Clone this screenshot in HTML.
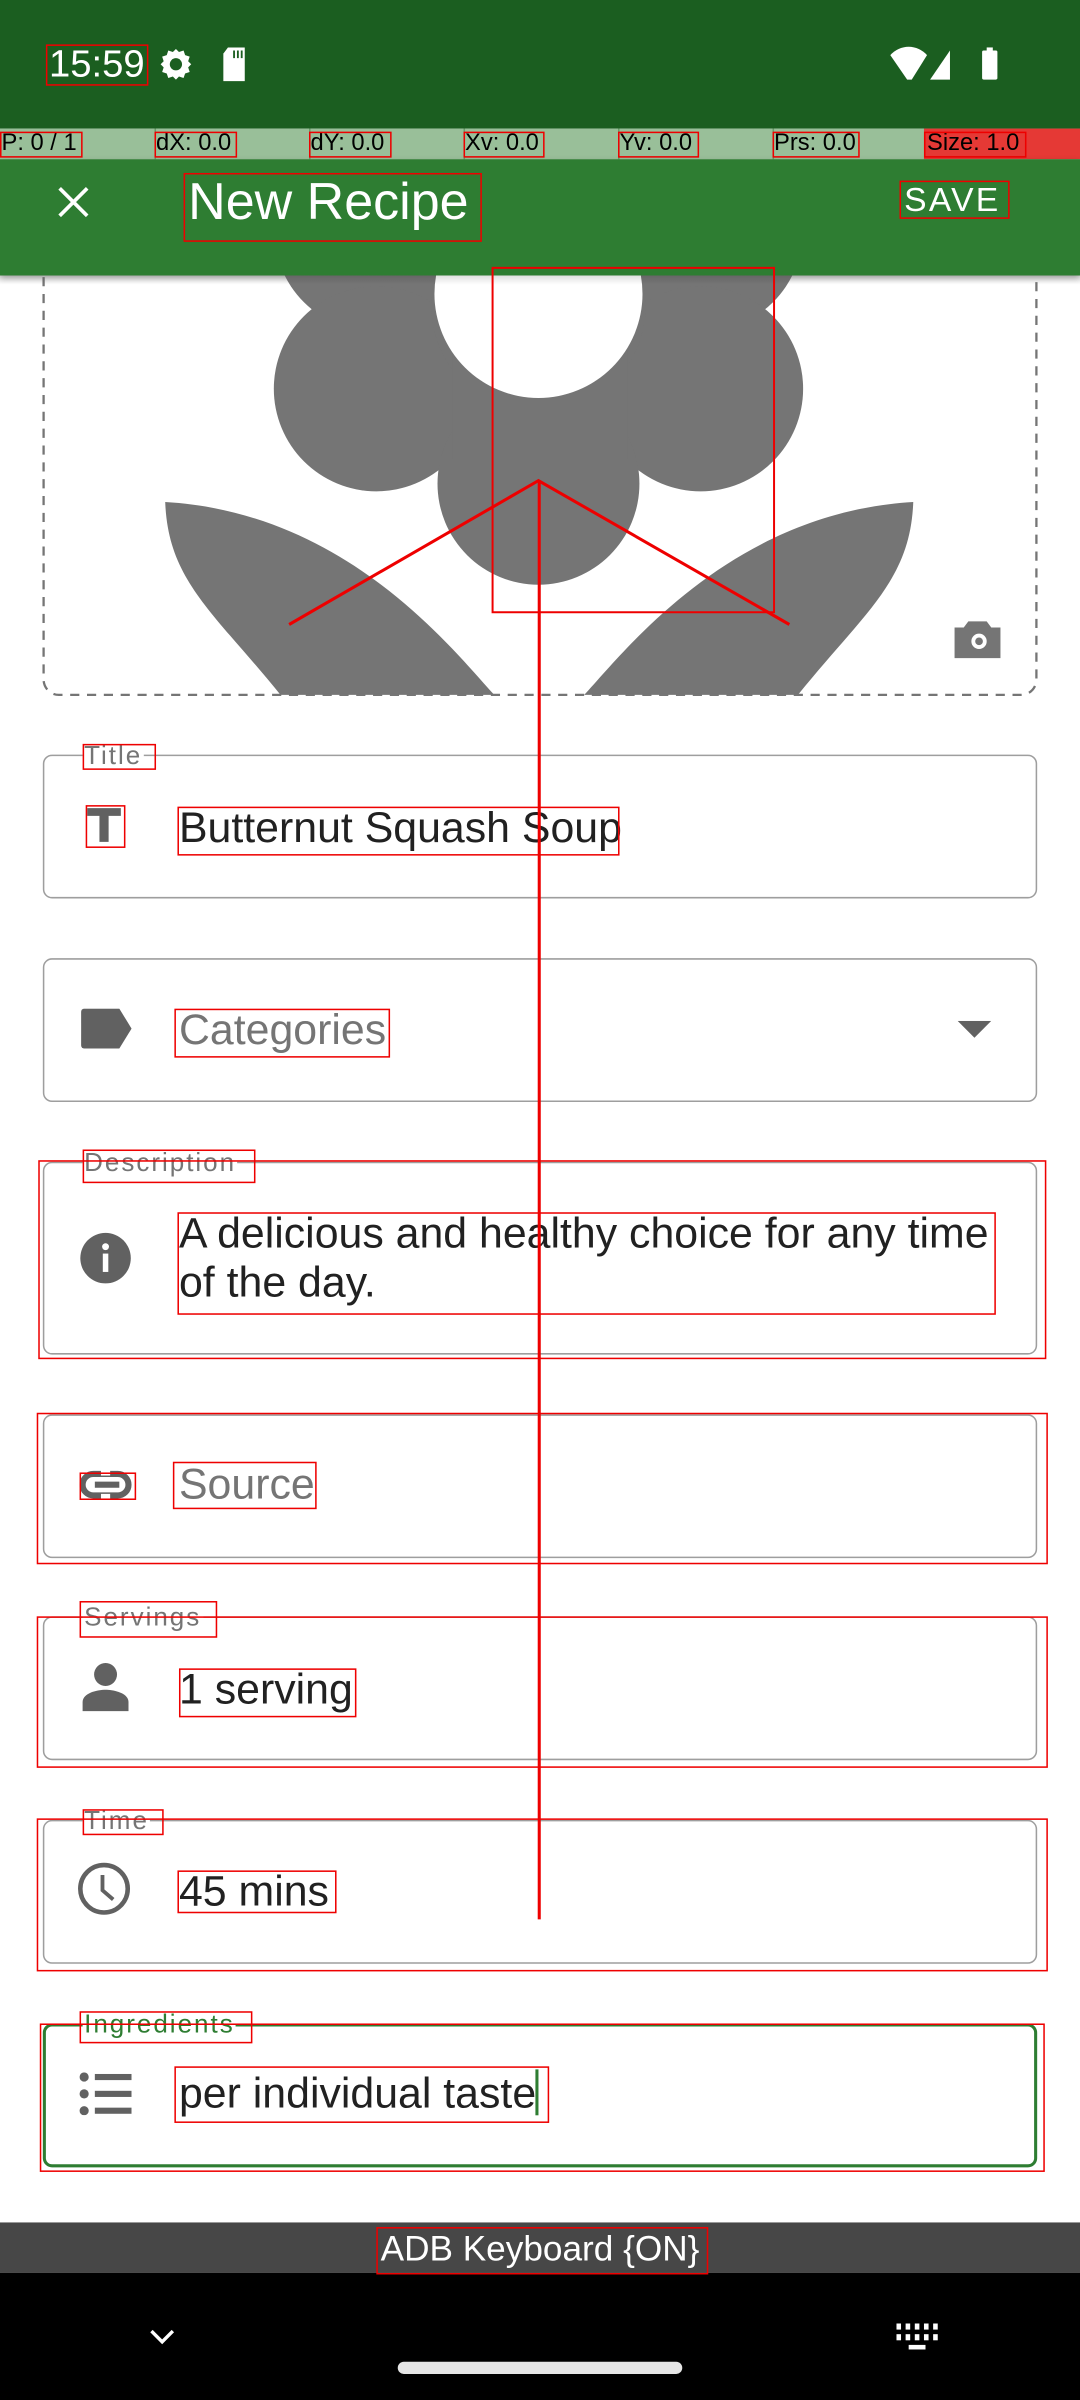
<!DOCTYPE html>
<html><head><meta charset="utf-8">
<style>
html,body{margin:0;padding:0;width:1080px;height:2400px;overflow:hidden;background:#fff}
#s{position:absolute;left:0;top:0;width:706px;height:1568px;transform-origin:0 0;transform:scale(1.52975,1.53061);font-family:"Liberation Sans",sans-serif;overflow:hidden;background:#fff}
.a{position:absolute}
.f{position:absolute;left:28px;width:650px;border:1.6px solid #9e9e9e;border-radius:6px;box-sizing:border-box}
.lb{position:absolute;left:54px;font-size:17px;letter-spacing:1.3px;color:#757575;background:#fff;padding:0 1px;line-height:16px}
.t{position:absolute;left:117px;font-size:28px;color:#212121;line-height:32px;white-space:nowrap}
.ph{color:#757575}
.r{position:absolute;border:1.3px solid #e00;box-sizing:border-box}
.ov span{position:absolute;top:0}
</style></head><body>
<div id="s">
<!-- status bar -->
<div class="a" style="left:0;top:0;width:706px;height:84px;background:#1b5e20"></div>
<div class="a" style="left:32px;top:28px;color:#fff;font-size:25px">15:59</div>
<svg class="a" style="left:102px;top:30px" width="26" height="24" viewBox="0 0 24 24"><path fill="#fff" d="M12 2l2 2 3-1 1 3 3 1-1 3 2 2-2 2 1 3-3 1-1 3-3-1-2 2-2-2-3 1-1-3-3-1 1-3-2-2 2-2-1-3 3-1 1-3 3 1z"/><circle cx="12" cy="12" r="4" fill="#1b5e20"/></svg>
<svg class="a" style="left:144px;top:30px" width="18" height="24" viewBox="0 0 18 24"><path fill="#fff" d="M5 1h11v22H2V5z"/><path stroke="#1b5e20" stroke-width="1.2" d="M9 3v5M11.5 3v5M14 3v5"/></svg>
<svg class="a" style="left:580px;top:30px" width="80" height="24" viewBox="0 0 80 24"><path fill="#fff" d="M2 6a16 16 0 0 1 24 0L16 22H13z"/><path fill="#fff" d="M41 3v19H28z"/><rect x="62" y="3" width="10" height="19" rx="1" fill="#fff"/><rect x="65" y="1" width="4" height="3" fill="#fff"/></svg>
<!-- overlay bar -->
<div class="a" style="left:0;top:84px;width:706px;height:20px;background:#99bf99"></div>
<div class="a" style="left:604px;top:84px;width:102px;height:20px;background:#e53935"></div>
<div class="a" style="left:101px;top:84px;width:1px;height:20px;background:#6a9a6a"></div>
<div class="a" style="left:202px;top:84px;width:1px;height:20px;background:#6a9a6a"></div>
<div class="a" style="left:303px;top:84px;width:1px;height:20px;background:#6a9a6a"></div>
<div class="a" style="left:404px;top:84px;width:1px;height:20px;background:#6a9a6a"></div>
<div class="a" style="left:505px;top:84px;width:1px;height:20px;background:#6a9a6a"></div>
<div class="a ov" style="left:0;top:85px;width:706px;font-size:15.5px;color:#000;line-height:18px">
<span style="left:1px">P: 0 / 1</span><span style="left:102px">dX: 0.0</span><span style="left:203px">dY: 0.0</span><span style="left:304px">Xv: 0.0</span><span style="left:405px">Yv: 0.0</span><span style="left:506px">Prs: 0.0</span><span style="left:606px">Size: 1.0</span></div>
<div class="r" style="left:0;top:86px;width:54px;height:17px"></div>
<div class="r" style="left:101px;top:86px;width:54px;height:17px"></div>
<div class="r" style="left:202px;top:86px;width:54px;height:17px"></div>
<div class="r" style="left:303px;top:86px;width:53px;height:17px"></div>
<div class="r" style="left:404px;top:86px;width:53px;height:17px"></div>
<div class="r" style="left:505px;top:86px;width:57px;height:17px"></div>
<div class="r" style="left:604px;top:86px;width:67px;height:17px"></div>
<!-- toolbar -->
<div class="a" style="left:0;top:104px;width:706px;height:76px;background:#2e7d32;box-shadow:0 2px 4px rgba(0,0,0,.3)"></div>
<svg class="a" style="left:36px;top:120px" width="24" height="24" viewBox="0 0 24 24"><path stroke="#fff" stroke-width="2.4" d="M3 3l18 18M21 3L3 21"/></svg>
<div class="a" style="left:123px;top:112px;color:#fff;font-size:34px;line-height:40px">New Recipe</div>
<div class="a" style="left:591px;top:118px;color:#fff;font-size:22px;letter-spacing:1.5px;line-height:26px">SAVE</div>
<!-- image area -->
<svg class="a" style="left:0;top:180px" width="706" height="280" viewBox="0 180 706 280">
<defs><clipPath id="c"><rect x="28" y="180" width="650" height="274"/></clipPath></defs>
<g clip-path="url(#c)" fill="#757575">
<circle cx="246" cy="150" r="67"/><circle cx="458" cy="150" r="67"/>
<circle cx="246" cy="254" r="67"/><circle cx="458" cy="254" r="67"/>
<circle cx="352" cy="316" r="66"/><circle cx="352" cy="200" r="70"/>
<rect x="296" y="180" width="114" height="120"/>
<circle cx="352" cy="192" r="68" fill="#fff"/>
<path d="M108 328C230 335 300 430 325 456H185C140 400 110 380 108 328z"/>
<path d="M597 328C475 335 405 430 380 456H520C565 400 595 380 597 328z"/>
</g>
<rect x="28.5" y="170" width="649" height="284" rx="10" fill="none" stroke="#757575" stroke-width="1.5" stroke-dasharray="6 5"/>
<path fill="#757575" d="M624 410h6l3-4h12l3 4h6v20h-30z"/><circle cx="640" cy="419" r="5" fill="#fff"/><circle cx="640" cy="419" r="2.5" fill="#757575"/>
</svg>
<div class="a" style="left:0;top:180px;width:706px;height:6px;background:linear-gradient(rgba(0,0,0,.12),rgba(0,0,0,0))"></div>

<!-- Title -->
<div class="f" style="top:493px;height:94px"></div><div class="lb" style="top:486px">Title</div>
<svg class="a" style="left:56px;top:527px" width="24" height="24" viewBox="0 0 24 24"><path fill="#616161" d="M1 1h22v5H15v17H9V6H1z"/></svg>
<div class="t" style="top:525px">Butternut Squash Soup</div>
<!-- Categories -->
<div class="f" style="top:626px;height:94px"></div>
<svg class="a" style="left:53px;top:659px" width="34" height="26" viewBox="0 0 34 26"><path fill="#616161" d="M2 0h23l8 13-8 13H2a2 2 0 0 1-2-2V2a2 2 0 0 1 2-2z"/></svg>
<div class="t ph" style="top:657px">Categories</div>
<svg class="a" style="left:626px;top:667px" width="22" height="12" viewBox="0 0 22 12"><path fill="#616161" d="M0 0h22L11 11z"/></svg>
<!-- Description -->
<div class="f" style="top:759px;height:126px"></div><div class="lb" style="top:752px">Description</div>
<svg class="a" style="left:51px;top:804px" width="36" height="36" viewBox="0 0 24 24"><circle cx="12" cy="12" r="11" fill="#616161"/><rect x="10.8" y="10" width="2.4" height="8" fill="#fff"/><circle cx="12" cy="7" r="1.5" fill="#fff"/></svg>
<div class="t" style="top:790px">A delicious and healthy choice for any time<br>of the day.</div>
<!-- Source -->
<div class="f" style="top:924px;height:94px"></div>
<svg class="a" style="left:52px;top:960px" width="36" height="20" viewBox="0 0 36 20"><rect x="2" y="3" width="30" height="14" rx="7" fill="none" stroke="#616161" stroke-width="4"/><rect x="10" y="8" width="16" height="4" fill="#616161"/><rect x="14" y="0" width="6" height="4" fill="#fff"/><rect x="14" y="16" width="6" height="4" fill="#fff"/></svg>
<div class="t ph" style="top:954px">Source</div>
<!-- Servings -->
<div class="f" style="top:1056px;height:94px"></div><div class="lb" style="top:1049px">Servings</div>
<svg class="a" style="left:52px;top:1086px" width="34" height="32" viewBox="0 0 34 32"><circle cx="17" cy="8" r="7.5" fill="#616161"/><path fill="#616161" d="M2 32v-6c0-6 10-8 15-8s15 2 15 8v6z"/></svg>
<div class="t" style="top:1088px">1 serving</div>
<!-- Time -->
<div class="f" style="top:1189px;height:94px"></div><div class="lb" style="top:1182px">Time</div>
<svg class="a" style="left:50px;top:1216px" width="36" height="36" viewBox="0 0 36 36"><circle cx="18" cy="18" r="15.5" fill="none" stroke="#616161" stroke-width="3"/><path d="M17 9v10l7 6" fill="none" stroke="#616161" stroke-width="2.5"/></svg>
<div class="t" style="top:1220px">45 mins</div>
<!-- Ingredients -->
<div class="f" style="top:1322px;height:94px;border:2.5px solid #2e7d32"></div><div class="lb" style="top:1315px;color:#2e7d32">Ingredients</div>
<svg class="a" style="left:52px;top:1354px" width="34" height="28" viewBox="0 0 34 28"><g fill="#616161"><circle cx="3" cy="3" r="3"/><circle cx="3" cy="14" r="3"/><circle cx="3" cy="25" r="3"/><rect x="10" y="1" width="24" height="4"/><rect x="10" y="12" width="24" height="4"/><rect x="10" y="23" width="24" height="4"/></g></svg>
<div class="t" style="top:1352px">per individual taste<span style="display:inline-block;width:2px;height:30px;background:#2e7d32;vertical-align:top"></span></div>

<!-- keyboard bar -->
<div class="a" style="left:0;top:1452px;width:706px;height:33px;background:#474747"></div>
<div class="a" style="left:0;top:1455px;width:706px;text-align:center;color:#fff;font-size:23px;line-height:28px">ADB Keyboard {ON}</div>
<div class="a" style="left:0;top:1485px;width:706px;height:84px;background:#000"></div>
<svg class="a" style="left:96px;top:1520px" width="20" height="14" viewBox="0 0 20 14"><path d="M3 3l7 7 7-7" stroke="#fff" stroke-width="2.2" fill="none"/></svg>
<svg class="a" style="left:586px;top:1518px" width="28" height="20" viewBox="0 0 28 20"><g fill="#fff"><rect x="0" y="0" width="3" height="4"/><rect x="6" y="0" width="3" height="4"/><rect x="12" y="0" width="3" height="4"/><rect x="18" y="0" width="3" height="4"/><rect x="24" y="0" width="3" height="4"/><rect x="0" y="7" width="3" height="4"/><rect x="6" y="7" width="3" height="4"/><rect x="12" y="7" width="3" height="4"/><rect x="18" y="7" width="3" height="4"/><rect x="24" y="7" width="3" height="4"/><rect x="8" y="14" width="11" height="3"/></g></svg>
<div class="a" style="left:260px;top:1543px;width:186px;height:8px;border-radius:4px;background:#e6e6e6"></div>

<!-- debug overlays -->
<div class="r" style="left:30px;top:29px;width:67px;height:27px"></div>
<div class="r" style="left:120px;top:113px;width:195px;height:45px"></div>
<div class="r" style="left:588px;top:118px;width:72px;height:25px"></div>
<div class="r" style="left:54px;top:486px;width:48px;height:17px"></div>
<div class="r" style="left:56px;top:526px;width:26px;height:28px"></div>
<div class="r" style="left:116px;top:527px;width:289px;height:32px"></div>
<div class="r" style="left:114px;top:659px;width:141px;height:32px"></div>
<div class="r" style="left:54px;top:751px;width:113px;height:22px"></div>
<div class="r" style="left:25px;top:758px;width:659px;height:130px"></div>
<div class="r" style="left:116px;top:792px;width:535px;height:67px"></div>
<div class="r" style="left:24px;top:923px;width:661px;height:99px"></div>
<div class="r" style="left:52px;top:962px;width:37px;height:18px"></div>
<div class="r" style="left:113px;top:955px;width:94px;height:31px"></div>
<div class="r" style="left:52px;top:1046px;width:90px;height:24px"></div>
<div class="r" style="left:24px;top:1056px;width:661px;height:99px"></div>
<div class="r" style="left:117px;top:1090px;width:116px;height:32px"></div>
<div class="r" style="left:54px;top:1182px;width:53px;height:17px"></div>
<div class="r" style="left:24px;top:1188px;width:661px;height:100px"></div>
<div class="r" style="left:116px;top:1222px;width:104px;height:28px"></div>
<div class="r" style="left:52px;top:1314px;width:113px;height:21px"></div>
<div class="r" style="left:26px;top:1322px;width:657px;height:97px"></div>
<div class="r" style="left:114px;top:1350px;width:245px;height:37px"></div>
<div class="r" style="left:246px;top:1455px;width:217px;height:31px"></div>
<svg class="a" style="left:0;top:0" width="706" height="1568" viewBox="0 0 706 1568">
<rect x="322" y="175" width="184" height="225" fill="none" stroke="#e00" stroke-width="1.3"/>
<path d="M189 408L352 314L516 408" fill="none" stroke="#e00" stroke-width="2"/>
<path d="M352.5 314V1254" stroke="#e00" stroke-width="2"/>
</svg>
</div>
</body></html>
